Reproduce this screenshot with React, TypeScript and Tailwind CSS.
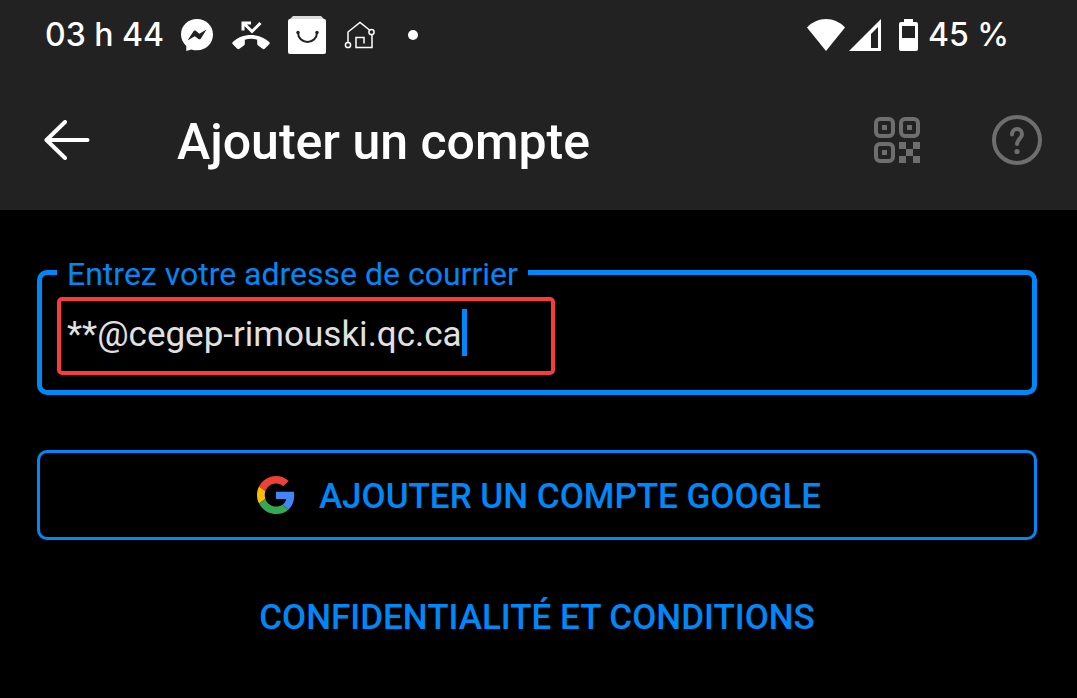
import { useState } from "react";

const MessengerIcon = () => (
  <svg viewBox="0 0 34 34" className="h-[34px] w-[34px]" aria-hidden="true">
    <path
      fill="#fff"
      d="M17 1C8 1 1 7.700 1 16.500c0 4.600 2 8.600 5.300 11.400V33l5-1.600c1.800.6 3.700.9 5.700.9 9 0 16-6.900 16-15.800S26 1 17 1z"
    />
    <path
      fill="#222"
      d="M7.500 22.500l6-9.300c.6-.9 1.500-1 2.300-.4l3.500 2.900 7.200-4.200-5.600 8.900c-.6.900-1.600 1.100-2.400.5l-3.700-2.700z"
    />
  </svg>
);

const MissedCallIcon = () => (
  <svg viewBox="0 0 38 30" className="h-[30px] w-[38px]" aria-hidden="true">
    <path fill="none" stroke="#fff" strokeWidth="3" d="M11 10.500V3h8M11.500 3l8.500 8.500L28.500 3" />
    <path
      fill="#fff"
      d="M19 15c-7 0-13.500 2.500-18.200 7-.7.7-.7 1.600 0 2.300l4.500 4.400c.6.600 1.500.6 2.100.1l4.500-3.200c.6-.4.9-1 .9-1.600v-4.300a22 22 0 0 1 12.400 0V24c0 .6.300 1.200.9 1.600l4.500 3.200c.6.500 1.500.5 2.100-.1l4.500-4.400c.7-.7.700-1.600 0-2.300C32.500 17.500 26 15 19 15z"
    />
  </svg>
);

const BagIcon = () => (
  <svg viewBox="0 0 38 38" className="h-[38px] w-[38px]" aria-hidden="true">
    <path fill="#dcdcdc" d="M5 0h28l4 4H1z" />
    <rect y="3" width="38" height="35" rx="2" fill="#fff" />
    <circle cx="10" cy="16.500" r="1.700" fill="#222" />
    <circle cx="29" cy="16.500" r="1.700" fill="#222" />
    <path fill="none" stroke="#222" strokeWidth="2" d="M10 16.500a9.500 9.500 0 0 0 19 0" />
  </svg>
);

const HouseIcon = () => (
  <svg viewBox="0 0 32 28" className="h-7 w-8" fill="none" stroke="#fff" strokeWidth="1.500" aria-hidden="true">
    <path d="M4 21.500V11L16 1.500l9.500 7.500M28 13.500V26.500H12V16.500h8V22.500" />
    <circle cx="27.500" cy="11" r="2.600" />
    <circle cx="4" cy="24" r="2.600" />
  </svg>
);

const WifiIcon = () => (
  <svg viewBox="0 0 38 32" className="h-8 w-[38px]" fill="#fff" aria-hidden="true">
    <path d="M0 8.500C5 3 12 0 19 0s14 3 19 8.500L19 32z" />
  </svg>
);

const SignalIcon = () => (
  <svg viewBox="0 0 32 32" className="h-8 w-8" aria-hidden="true">
    <path fill="#fff" d="M32 0v32H0z" />
    <path fill="#222" d="M29 8v21h-7V15z" />
  </svg>
);

const BatteryIcon = () => (
  <svg viewBox="0 0 19 32" className="h-8 w-[19px]" aria-hidden="true">
    <path fill="#fff" d="M5 0h9v3h3a2 2 0 0 1 2 2v25a2 2 0 0 1-2 2H2a2 2 0 0 1-2-2V5a2 2 0 0 1 2-2h3z" />
    <path fill="#222" d="M3 7h13v12H3z" />
  </svg>
);

const BackIcon = () => (
  <svg
    viewBox="0 0 46 40"
    className="h-10 w-[46px]"
    fill="none"
    stroke="#fff"
    strokeWidth="4"
    strokeLinecap="round"
    strokeLinejoin="round"
    aria-hidden="true"
  >
    <path d="M21 2L2.500 20 21 38M3 20h40.500" />
  </svg>
);

const QrIcon = () => (
  <svg viewBox="0 0 46 46" className="h-[46px] w-[46px]" aria-hidden="true">
    <g fill="none" stroke="#6e6e6e" strokeWidth="4">
      <rect x="2" y="2" width="17" height="17" rx="4" />
      <rect x="27" y="2" width="17" height="17" rx="4" />
      <rect x="2" y="27" width="17" height="17" rx="4" />
    </g>
    <path
      fill="#6e6e6e"
      d="M8 8h5v5H8zM33 8h5v5h-5zM8 33h5v5H8zM25 25h7v7h-7zM39 25h7v7h-7zM32 32h7v7h-7zM25 39h7v7h-7zM39 39h7v7h-7z"
    />
  </svg>
);

const HelpIcon = () => (
  <svg viewBox="0 0 50 50" className="h-[50px] w-[50px]" fill="none" stroke="#6e6e6e" strokeWidth="4" aria-hidden="true">
    <circle cx="25" cy="25" r="23" />
    <path strokeLinecap="round" d="M20 19.500c0-3.200 2.200-5.500 5-5.500s5 2.200 5 5.200c0 4.300-5 5.300-5 9.800" />
    <circle cx="25" cy="36.500" r="2.600" fill="#6e6e6e" stroke="none" />
  </svg>
);

const GoogleIcon = () => (
  <svg viewBox="0 0 48 48" className="h-[38px] w-[38px]" aria-hidden="true">
    <path fill="#EA4335" d="M24 9.500c3.540 0 6.710 1.220 9.210 3.600l6.850-6.850C35.900 2.380 30.470 0 24 0 14.620 0 6.510 5.380 2.560 13.220l7.980 6.190C12.430 13.720 17.740 9.500 24 9.500z" />
    <path fill="#4285F4" d="M46.980 24.550c0-1.570-.15-3.090-.38-4.550H24v9.020h12.940c-.58 2.960-2.260 5.480-4.780 7.180l7.730 6c4.510-4.180 7.090-10.360 7.090-17.650z" />
    <path fill="#FBBC05" d="M10.530 28.590c-.48-1.450-.76-2.990-.76-4.590s.27-3.140.76-4.590l-7.980-6.190C.92 16.460 0 20.120 0 24c0 3.880.92 7.540 2.560 10.780l7.970-6.190z" />
    <path fill="#34A853" d="M24 48c6.480 0 11.930-2.130 15.890-5.810l-7.730-6c-2.150 1.450-4.920 2.300-8.160 2.300-6.260 0-11.570-4.220-13.470-9.910l-7.980 6.190C6.510 42.620 14.620 48 24 48z" />
  </svg>
);

const StatusBar = () => (
  <div className="flex h-[70px] items-center justify-between pl-[45px] pr-[68px] font-['Inter',sans-serif] text-[32px] font-medium">
    <div className="flex items-center">
      <p>03 h 44</p>
      <div className="ml-4 flex items-center gap-[18px]">
        <MessengerIcon />
        <MissedCallIcon />
        <BagIcon />
        <HouseIcon />
      </div>
      <span className="ml-8 h-[10px] w-[10px] rounded-full bg-white" />
    </div>
    <div className="flex items-center">
      <WifiIcon />
      <span className="ml-1 mr-[18px] flex">
        <SignalIcon />
      </span>
      <BatteryIcon />
      <p className="ml-[10px]">45 %</p>
    </div>
  </div>
);

const TitleBar = () => (
  <div className="flex h-[140px] items-center pl-11 pr-[35px]">
    <button type="button" aria-label="Retour">
      <BackIcon />
    </button>
    <h1 className="ml-[87px] flex-1 pt-1 text-[50px] font-medium leading-[60px]">Ajouter un compte</h1>
    <button type="button" aria-label="Code QR">
      <QrIcon />
    </button>
    <button type="button" aria-label="Aide" className="ml-[72px]">
      <HelpIcon />
    </button>
  </div>
);

const App = () => {
  const [email, setEmail] = useState("**@cegep-rimouski.qc.ca");

  return (
    <div className="min-h-screen bg-black font-['Roboto',sans-serif] text-white">
      <header className="bg-[#222222]">
        <StatusBar />
        <TitleBar />
      </header>
      <main className="flex flex-col pl-[37px] pr-10 pt-[45px]">
        <fieldset className="rounded-[10px] border-[5px] border-[#0088f8] px-[15px] pb-[15px] pt-[7px]">
          <legend className="px-[10px] pt-1 text-[32px] leading-[31px] text-[#0088f8]">
            <label htmlFor="email">Entrez votre adresse de courrier</label>
          </legend>
          <div className="flex h-[78px] w-[498px] max-w-full items-start rounded-[5px] border-4 border-[#f83c3c] px-[6px] pt-2">
            <input
              id="email"
              type="text"
              value={email}
              onChange={(e) => setEmail(e.target.value)}
              className="min-w-0 bg-transparent text-[35px] leading-[52px] text-[#e1e1e1] caret-transparent outline-none [field-sizing:content]"
            />
            <span className="h-[47px] w-[5px] bg-[#0088f8]" />
          </div>
        </fieldset>
        <button
          type="button"
          className="mt-[55px] flex h-[90px] items-center justify-center gap-6 rounded-[10px] border-[3px] border-[#0088f8] pl-1 text-[35px] font-medium text-[#0088f8]"
        >
          <GoogleIcon />
          <span className="pt-1">AJOUTER UN COMPTE GOOGLE</span>
        </button>
        <a href="#conditions" className="mt-[52px] self-center text-[35px] font-medium text-[#0088f8]">
          CONFIDENTIALITÉ ET CONDITIONS
        </a>
      </main>
    </div>
  );
};

export default App;
